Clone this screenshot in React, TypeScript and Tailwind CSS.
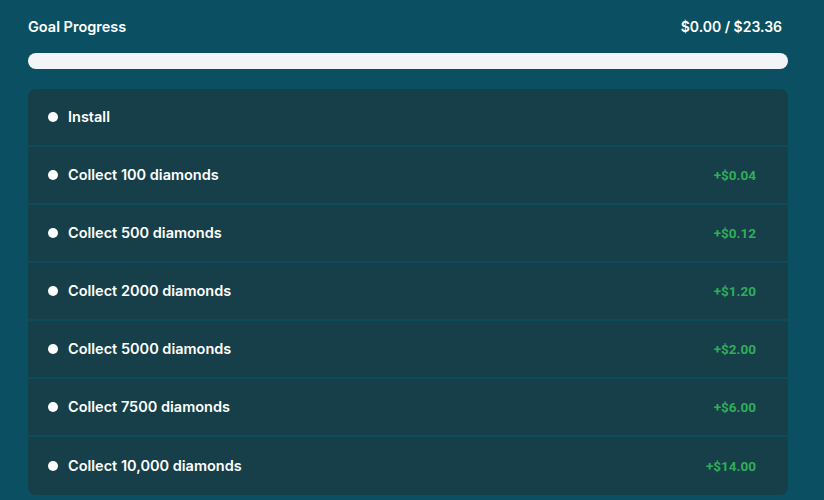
const ROWS = [
  { label: "Install", reward: "" },
  { label: "Collect 100 diamonds", reward: "+$0.04" },
  { label: "Collect 500 diamonds", reward: "+$0.12" },
  { label: "Collect 2000 diamonds", reward: "+$1.20" },
  { label: "Collect 5000 diamonds", reward: "+$2.00" },
  { label: "Collect 7500 diamonds", reward: "+$6.00" },
  { label: "Collect 10,000 diamonds", reward: "+$14.00" },
];

export default function App() {
  return (
    <div className="w-[824px] h-[500px] overflow-hidden bg-[#0b5062] pl-7 pr-9 pt-[16px] font-['Inter','Noto_Sans',sans-serif] text-white">
      {/* Header */}
      <div className="flex items-center justify-between h-[21px] pr-[6px]">
        <span className="text-[14.5px] font-semibold">Goal Progress</span>
        <span className="text-[14px] font-semibold">$0.00 / $23.36</span>
      </div>

      {/* Progress bar */}
      <div className="mt-[16px] h-4 w-full rounded-full bg-[#f3f4f5]" />

      {/* Steps */}
      <div className="mt-5 rounded-lg bg-[#163f4a] overflow-hidden">
        {ROWS.map((row, i) => (
          <div
            key={row.label}
            className={`flex items-center h-[58px] pl-5 pr-8 ${i < ROWS.length - 1 ? "border-b-2 border-[#0d4a5a]" : ""}`}
          >
            <span className="h-[10px] w-[10px] rounded-full bg-white shrink-0" />
            <span className="ml-[10px] text-[14.5px] font-semibold">{row.label}</span>
            <span className="ml-auto text-[13.5px] font-bold text-[#2fae58] font-['Roboto',sans-serif]">
              {row.reward}
            </span>
          </div>
        ))}
      </div>
    </div>
  );
}
